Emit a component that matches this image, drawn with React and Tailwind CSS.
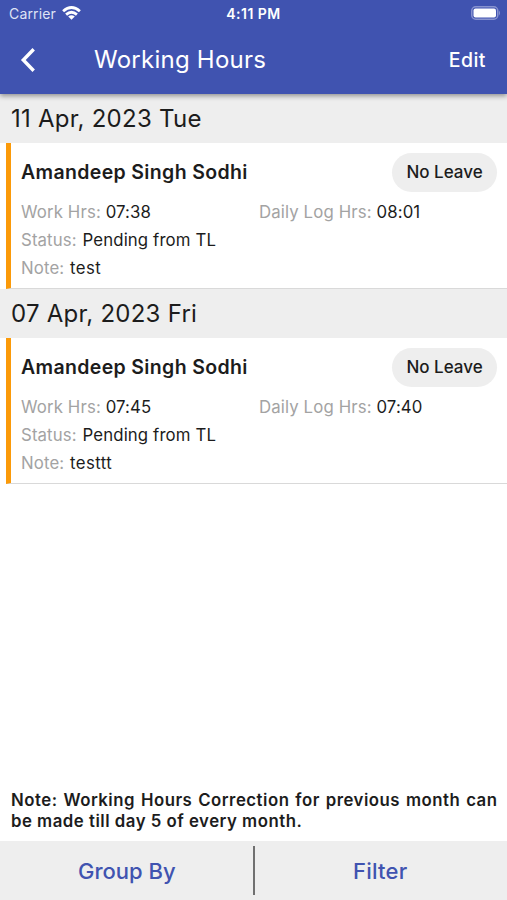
import React from 'react';

const entries = [
  { date: '11 Apr, 2023 Tue', work: '07:38', log: '08:01', note: 'test' },
  { date: '07 Apr, 2023 Fri', work: '07:45', log: '07:40', note: 'testtt' },
];

const Field = ({ label, value, valueClass }) => (
  <p className="whitespace-nowrap">
    <span className="text-[#a3a3a3]">{label}: </span>
    <span className={valueClass}>{value}</span>
  </p>
);

const Entry = ({ entry }) => (
  <section>
    <h2 className="h-[49px] bg-[#eeeeee] pl-[11px] text-[24px] leading-[49px] tracking-[0.25px]">{entry.date}</h2>
    <div className="ml-[6px] h-[146px] border-b border-l-[5px] border-b-[#d9d9d9] border-l-[#fb9a09] pl-[10px] pr-[10px] pt-[10px]">
      <div className="flex items-center justify-between">
        <h3 className="pt-px text-[19.5px] font-semibold tracking-[0.35px]">Amandeep Singh Sodhi</h3>
        <span className="h-[39px] w-[105px] rounded-full bg-[#eeeeee] text-center text-[17px] font-medium leading-[39px]">No Leave</span>
      </div>
      <div className="mt-[6px] text-[16.8px] leading-[28px] tracking-[0.12px]">
        <div className="grid grid-cols-2">
          <Field label="Work Hrs" value={entry.work} />
          <Field label="Daily Log Hrs" value={entry.log} />
        </div>
        <Field label="Status" value="Pending from TL" valueClass="ml-px" />
        <Field label="Note" value={entry.note} valueClass="ml-px tracking-[0.4px]" />
      </div>
    </div>
  </section>
);

const App = () => (
  <div className="flex h-[900px] w-[507px] flex-col overflow-hidden bg-white font-['Inter',sans-serif] text-[#1c1c1c]">
    <header className="z-10 h-[94px] shrink-0 bg-[#4053b0] text-white shadow-[0_2px_5px_rgba(0,0,0,0.4)]">
      {/* Status bar */}
      <div className="grid h-[26px] grid-cols-3 items-center pl-[9px] pr-[6px] text-[14px]">
        <div className="flex items-center gap-[6px] tracking-[0.15px] text-[#dfe3f5]">
          Carrier
          <svg className="text-white" width="19" height="14" viewBox="0 0 19 14" fill="none" stroke="currentColor" strokeWidth="2.8">
            <path d="M1.1 5.2Q9.5-2.2 17.9 5.2M4.1 8.6Q9.5 3.8 14.9 8.6" />
            <path d="M6.2 10.6Q9.5 8 12.8 10.6L9.5 13.8Z" fill="currentColor" stroke="none" />
          </svg>
        </div>
        <span className="-ml-[3px] text-center font-semibold tracking-[0.5px]">4:11 PM</span>
        <svg className="justify-self-end" width="30" height="14" viewBox="0 0 30 14" fill="none">
          <rect x=".75" y=".75" width="26" height="12.5" rx="4" stroke="#8893cf" strokeWidth="1.5" />
          <rect x="2.5" y="2.5" width="22.5" height="9" rx="2" fill="white" />
          <path d="M28 4.5Q30 7 28 9.5Z" fill="#8893cf" />
        </svg>
      </div>
      <div className="flex h-[68px] items-center pl-[20px] pr-[21px]">
        <svg width="16" height="25" viewBox="0 0 16 25" fill="none" stroke="currentColor" strokeWidth="3.4">
          <path d="M13.7 1.2L3.3 12L13.7 22.8" />
        </svg>
        <h1 className="ml-[58px] text-[24px] tracking-[0.25px]">Working Hours</h1>
        <button className="ml-auto pt-px text-[19.5px] font-medium tracking-[0.5px]">Edit</button>
      </div>
    </header>
    <main className="flex-1">
      {entries.map((entry) => <Entry key={entry.date} entry={entry} />)}
    </main>
    <p className="pb-[9px] pl-[11px] pr-[9.5px] text-justify text-[16.8px] font-semibold leading-[21px] tracking-[0.5px]">
      Note: Working Hours Correction for previous month can be made till day 5 of every month.
    </p>
    <footer className="flex h-[59px] shrink-0 items-center bg-[#eeeeee] pl-px text-[22px] font-medium text-[#4053b0]">
      <button className="flex-1 pt-[2px]">Group By</button>
      <div className="h-[49px] w-[2px] bg-[#707070]" />
      <button className="flex-1 pr-px pt-[2px] tracking-[0.2px]">Filter</button>
    </footer>
  </div>
);

export default App;
